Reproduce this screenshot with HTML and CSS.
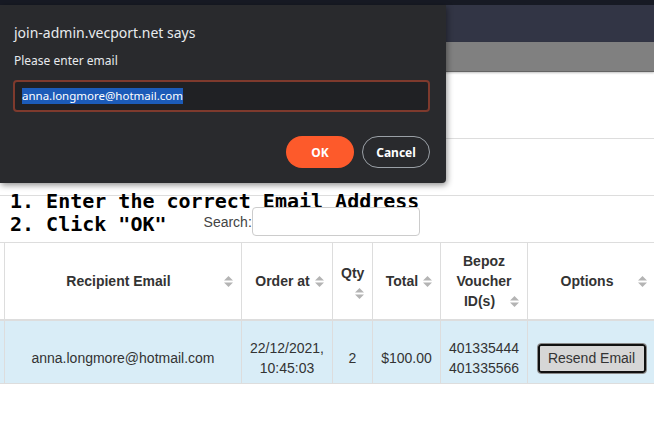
FILE: index.html
```html
<!DOCTYPE html>
<html lang="en">

<head>
  <meta charset="UTF-8">
  <meta name="viewport" content="width=device-width, initial-scale=1.0">
  <title>Voucher Orders</title>
  <link rel="stylesheet" href="styles.css">
</head>

<body>

  <div class="topstrip"></div>
  <div class="navbar"></div>
  <div class="subbar"></div>

  <div class="panel-title"></div>
  <div class="panel-filters"></div>

  <div class="toolbar">
    <div class="step">1. Enter the correct Email Address</div>
    <div class="toolbar-row">
      <div class="step">2. Click "OK"</div>
      <label class="search">Search:<input type="search" class="search-input"></label>
    </div>
  </div>

  <div class="table-wrap">
    <table class="orders">
      <colgroup>
        <col class="c-id">
        <col class="c-email">
        <col class="c-date">
        <col class="c-qty">
        <col class="c-total">
        <col class="c-voucher">
        <col class="c-options">
      </colgroup>
      <thead>
        <tr>
          <th></th>
          <th>Recipient Email<svg class="sort" viewBox="0 0 9 11"><path d="M0 4.5 4.5 0 9 4.5Z M0 6.5 4.5 11 9 6.5Z"/></svg></th>
          <th>Order at<svg class="sort" viewBox="0 0 9 11"><path d="M0 4.5 4.5 0 9 4.5Z M0 6.5 4.5 11 9 6.5Z"/></svg></th>
          <th>Qty<svg class="sort" viewBox="0 0 9 11"><path d="M0 4.5 4.5 0 9 4.5Z M0 6.5 4.5 11 9 6.5Z"/></svg></th>
          <th>Total<svg class="sort" viewBox="0 0 9 11"><path d="M0 4.5 4.5 0 9 4.5Z M0 6.5 4.5 11 9 6.5Z"/></svg></th>
          <th>Bepoz Voucher ID(s)<svg class="sort" viewBox="0 0 9 11"><path d="M0 4.5 4.5 0 9 4.5Z M0 6.5 4.5 11 9 6.5Z"/></svg></th>
          <th>Options<svg class="sort" viewBox="0 0 9 11"><path d="M0 4.5 4.5 0 9 4.5Z M0 6.5 4.5 11 9 6.5Z"/></svg></th>
        </tr>
      </thead>
      <tbody>
        <tr class="info">
          <td></td>
          <td>anna.longmore@hotmail.com</td>
          <td>22/12/2021,<br>10:45:03</td>
          <td>2</td>
          <td>$100.00</td>
          <td>401335444<br>401335566</td>
          <td><button class="resend">Resend Email</button></td>
        </tr>
      </tbody>
    </table>
  </div>

  <!-- browser prompt on top of the page -->
  <div class="prompt">
    <div class="prompt-title">join-admin.vecport.net says</div>
    <div class="prompt-msg">Please enter email</div>
    <div class="prompt-input"><span class="selected">anna.longmore@hotmail.com</span></div>
    <div class="prompt-actions">
      <button class="btn-ok">OK</button>
      <button class="btn-cancel">Cancel</button>
    </div>
  </div>

</body>

</html>
```

FILE: styles.css
```css
body {
  font-family: 'Liberation Sans', Arial, sans-serif;
  font-size: 14px;
  color: #333;
  background-color: #fff;
  margin: 0;
  overflow: hidden;
}

.topstrip {
  height: 5px;
  background-color: #171a24;
}

.navbar {
  height: 37px;
  background-color: #323545;
}

.subbar {
  height: 29px;
  background-color: #808080;
  border-bottom: 1px solid #646464;
  box-shadow: 0 1px 2px rgba(0, 0, 0, 0.25);
}

.panel-title {
  height: 66px;
  border-bottom: 1px solid #ddd;
}

.panel-filters {
  height: 56px;
  border-bottom: 1px solid #ddd;
}

.toolbar {
  padding-left: 10px;
}

.step {
  font-family: 'DejaVu Sans Mono', 'Liberation Mono', monospace;
  font-weight: bold;
  font-size: 20px;
  line-height: 23px;
  color: #000;
  white-space: pre;
}

.toolbar > .step {
  margin-top: -6px;
}

.toolbar-row {
  display: flex;
  align-items: flex-end;
  margin-top: -6px;
}

.search {
  display: flex;
  align-items: center;
  margin-left: 37px;
  color: #444;
  font-size: 14px;
}

.search-input {
  width: 168px;
  height: 29px;
  box-sizing: border-box;
  margin: 0;
  padding: 0 6px;
  border: 1px solid #ccc;
  border-radius: 4px;
}

.table-wrap {
  margin-top: 6px;
  overflow: hidden;
}

.orders {
  table-layout: fixed;
  border-collapse: collapse;
  width: 691px;
  margin-left: -36px;
}

.c-id { width: 40px; }
.c-email { width: 237px; }
.c-date { width: 91px; }
.c-qty { width: 40px; }
.c-total { width: 68px; }
.c-voucher { width: 87px; }
.c-options { width: 128px; }

.orders th,
.orders td {
  border: 1px solid #ddd;
  padding: 8px;
  line-height: 20px;
  text-align: center;
  vertical-align: middle;
}

.orders th {
  border-bottom-width: 2px;
  font-weight: bold;
  color: #333;
}

.sort {
  float: right;
  width: 9px;
  height: 11px;
  margin-top: 5px;
  fill: #b4b4b4;
}

.orders td {
  padding: 17px 8px 5px;
}

.info td {
  background-color: #d9edf7;
}

.resend {
  width: 110px;
  height: 31px;
  box-sizing: border-box;
  font-family: 'Liberation Sans', Arial, sans-serif;
  font-size: 14px;
  color: #333;
  background-color: #d6d6d6;
  border: 1px solid #8a8a8a;
  border-radius: 4px;
  box-shadow: inset 0 0 0 2px #111;
  vertical-align: middle;
}

.prompt {
  position: absolute;
  top: 5px;
  left: 0;
  width: 446px;
  height: 178px;
  box-sizing: border-box;
  padding: 18px 16px 0 14px;
  background-color: #292a2d;
  border-radius: 0 0 4px 0;
  box-shadow: 1px 2px 6px rgba(0, 0, 0, 0.45);
  font-family: 'Noto Sans', 'Open Sans', sans-serif;
  color: #e8eaed;
}

.prompt-title {
  font-size: 14px;
  line-height: 20px;
}

.prompt-msg {
  font-size: 12px;
  line-height: 18px;
  margin-top: 9px;
}

.prompt-input {
  margin-top: 10px;
  margin-left: -1px;
  height: 32px;
  box-sizing: border-box;
  padding: 0 7px;
  border: 2px solid #7e3a2d;
  border-radius: 4px;
  background-color: #202124;
  display: flex;
  align-items: center;
  font-size: 11.5px;
}

.selected {
  background-color: #1c5bb8;
  color: #fff;
  line-height: 16px;
}

.prompt-actions {
  display: flex;
  justify-content: flex-end;
  gap: 8px;
  margin-top: 24px;
}

.prompt-actions button {
  width: 68px;
  height: 32px;
  border-radius: 16px;
  font-family: 'Noto Sans', 'Open Sans', sans-serif;
  font-size: 12px;
  font-weight: bold;
  color: #fff;
}

.btn-ok {
  background-color: #fd5a2b;
  border: none;
}

.btn-cancel {
  background-color: transparent;
  border: 1px solid #9aa0a6;
}
```
